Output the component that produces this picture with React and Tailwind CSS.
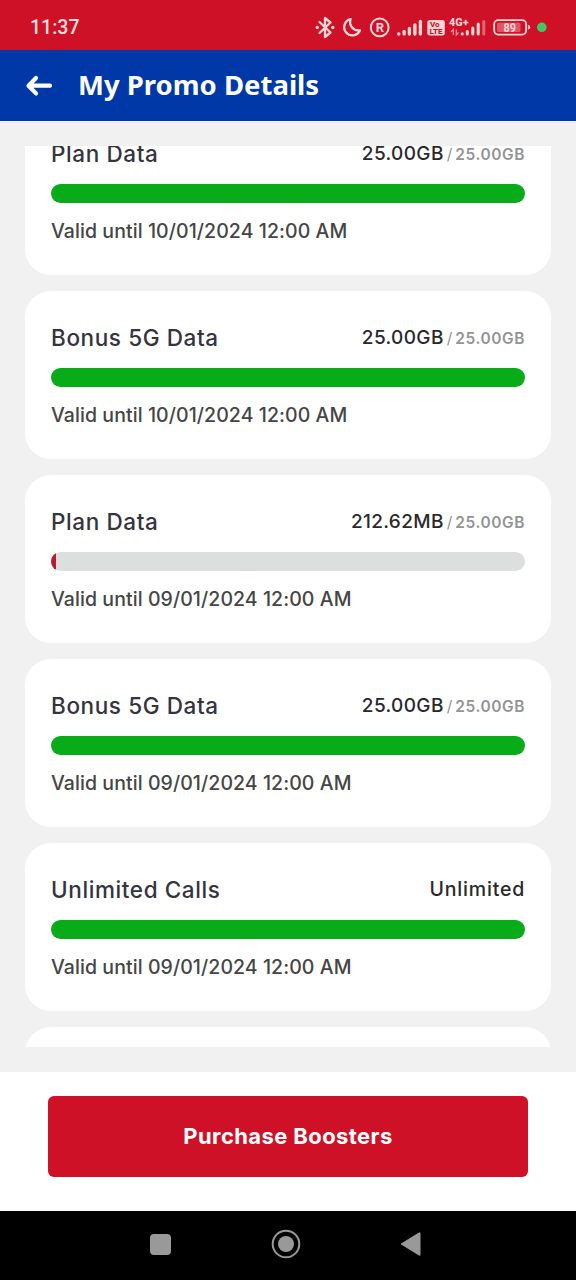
import React from 'react';

const promos = [
  { id: 1, name: 'Plan Data', remaining: '25.00GB', total: '25.00GB', percent: 100, validUntil: '10/01/2024 12:00 AM' },
  { id: 2, name: 'Bonus 5G Data', remaining: '25.00GB', total: '25.00GB', percent: 100, validUntil: '10/01/2024 12:00 AM' },
  { id: 3, name: 'Plan Data', remaining: '212.62MB', total: '25.00GB', percent: 1.05, validUntil: '09/01/2024 12:00 AM' },
  { id: 4, name: 'Bonus 5G Data', remaining: '25.00GB', total: '25.00GB', percent: 100, validUntil: '09/01/2024 12:00 AM' },
  { id: 5, name: 'Unlimited Calls', remaining: 'Unlimited', total: null, percent: 100, validUntil: '09/01/2024 12:00 AM' }
];

const StatusIcons = () => (
  <svg width="240" height="50" viewBox="312 0 240 50" className="font-[Roboto,sans-serif]" fill="#ffd6d6">
    {/* Bluetooth */}
    <path d="M319.5 22 L330.5 32.5 L325 37 V18 L330.5 22.5 L319.5 33" fill="none" stroke="#ffd6d6" strokeWidth="2.3" strokeLinejoin="round" strokeLinecap="round" />
    <circle cx="317.3" cy="27.5" r="1.7" />
    <circle cx="332.8" cy="27.5" r="1.7" />
    {/* Do not disturb */}
    <path d="M350.6 19.2 A8.2 8.2 0 1 0 360 30.3 A8.4 8.4 0 0 1 350.6 19.2 Z" fill="none" stroke="#ffd6d6" strokeWidth="2.3" strokeLinejoin="round" />
    {/* Roaming */}
    <circle cx="379.7" cy="27.4" r="8.9" fill="none" stroke="#ffd6d6" strokeWidth="2" />
    <text x="379.9" y="32" fontSize="13" fontWeight="700" textAnchor="middle">R</text>
    {/* First SIM signal */}
    <g stroke="#ffd6d6" strokeWidth="3.3" strokeLinecap="round">
      <path d="M398.8 33.8 V34 M404.1 31.5 V34 M409.4 28.5 V34 M414.9 24.8 V34 M420.4 21.3 V34" />
    </g>
    <rect x="427.3" y="20" width="17.5" height="15.5" rx="2.5" />
    <text x="430" y="27.2" fontSize="8" fontWeight="800" fill="#c31328">Vo</text>
    <text x="429.5" y="34.4" fontSize="8" fontWeight="800" fill="#c31328" textLength="13" lengthAdjust="spacingAndGlyphs">LTE</text>
    {/* Second SIM signal */}
    <text x="449" y="26" fontSize="10.5" fontWeight="800" textLength="19.5" lengthAdjust="spacingAndGlyphs">4G+</text>
    <path d="M453.3 35 V29.5 L451 32 M456.3 29.5 V35 L458.5 32.5" fill="none" stroke="#f18c94" strokeWidth="1.3" />
    <g strokeWidth="3" strokeLinecap="round" stroke="#ffd6d6">
      <path d="M462.2 33.8 V34 M467.3 31.5 V34 M472.8 28 V34 M478.2 24 V34" />
      <path d="M483.8 21.5 V34" stroke="#e86470" />
    </g>
    {/* Battery */}
    <rect x="494.2" y="20.1" width="32" height="14.5" rx="4" fill="none" stroke="#ffd6d6" strokeWidth="1.8" />
    <rect x="497" y="22.7" width="23.5" height="9.3" rx="1.5" fill="#e05566" />
    <path d="M528.2 25 Q530.2 25 530.2 27.3 Q530.2 29.6 528.2 29.6 Z" />
    <text x="509.8" y="31.7" fontSize="12" fontWeight="700" textAnchor="middle" textLength="12.5" lengthAdjust="spacingAndGlyphs">89</text>
    <circle cx="541.8" cy="27.3" r="4.8" fill="#41c763" />
  </svg>
);

const PromoCard = ({ promo }) => (
  <div className="h-42 shrink-0 rounded-[26px] bg-white px-[26px] pt-8">
    <div className="flex h-[30px] items-center justify-between whitespace-nowrap">
      <h2 className="-mt-px text-[22.5px] leading-[30px] font-medium tracking-[0.6px] text-[#34343f]">{promo.name}</h2>
      {promo.total ? (
        <p className="flex items-baseline text-[19px] font-medium tracking-[0.35px] text-[#29292c]">
          {promo.remaining}
          <span className="ml-[3px] text-[15.5px] font-normal tracking-normal text-[#949494]">/</span>
          <span className="ml-[3px] text-[15.5px] font-semibold tracking-[0.55px] text-[#949494]">{promo.total}</span>
        </p>
      ) : (
        <p className="text-[19.5px] font-medium tracking-[0.8px] text-[#29292c]">{promo.remaining}</p>
      )}
    </div>
    <div className="mt-[15px] h-[19px] overflow-hidden rounded-full bg-[#dcdfde]">
      <div
        className={promo.percent < 10 ? 'h-full bg-[#bd1830]' : 'h-full bg-[#08ab18]'}
        style={{ width: `${promo.percent}%` }}
      />
    </div>
    <p className="mt-[13px] text-[19.5px] leading-[30px] font-medium tracking-[0.07px] whitespace-nowrap text-[#454545]">
      Valid until {promo.validUntil}
    </p>
  </div>
);

const App = () => {
  return (
    <div className="flex h-[1280px] w-[576px] flex-col overflow-hidden bg-[#f1f1f1] font-[Inter,sans-serif]">
      <div className="flex h-[50px] shrink-0 items-center justify-between bg-[#ce1126] pr-6 pl-[30px]">
        <span className="pt-[5px] font-[Roboto,sans-serif] text-[19.5px] font-medium text-[#ffdfdf]">11:37</span>
        <StatusIcons />
      </div>

      <header className="flex h-[71px] shrink-0 items-center bg-[#0038a8] pl-[25px] text-white">
        <svg width="28" height="24" viewBox="0 0 28 24" fill="none" stroke="currentColor" strokeWidth="4.2" strokeLinecap="round" strokeLinejoin="round">
          <path d="M11 4 L3.5 11.7 L11 19.4 M4 11.7 H25" />
        </svg>
        <h1 className="-mt-0.5 ml-[25px] font-['Noto_Sans',sans-serif] text-[27.5px] leading-[40px] font-bold whitespace-nowrap">My Promo Details</h1>
      </header>

      <main className="mx-[25px] mt-[25px] flex h-[901px] shrink-0 flex-col overflow-hidden">
        <div className="-mt-[39px] flex flex-col gap-4">
          {promos.map((promo) => (
            <PromoCard key={promo.id} promo={promo} />
          ))}
          <div className="h-42 shrink-0 rounded-[26px] bg-white" />
        </div>
      </main>

      <footer className="mt-[25px] h-[139px] shrink-0 bg-white px-12 pt-6">
        <button className="h-[81px] w-full rounded-md bg-[#ce1126] text-[22px] font-bold tracking-[0.4px] whitespace-nowrap text-white">
          Purchase Boosters
        </button>
      </footer>

      <nav className="flex h-[69px] shrink-0 items-center justify-between bg-black pr-[154px] pb-[3px] pl-[150px]">
        <div className="size-[21px] rounded-[4px] bg-[#999]" />
        <svg width="30" height="30" viewBox="0 0 30 30" fill="#999">
          <circle cx="15" cy="15" r="13.3" fill="none" stroke="#999" strokeWidth="2" />
          <circle cx="15" cy="15" r="8" />
        </svg>
        <svg width="22" height="26" viewBox="0 0 22 26" fill="#999" stroke="#999" strokeWidth="2" strokeLinejoin="round">
          <path d="M2 13 L19.5 2.3 V23.7 Z" />
        </svg>
      </nav>
    </div>
  );
};

export default App;
